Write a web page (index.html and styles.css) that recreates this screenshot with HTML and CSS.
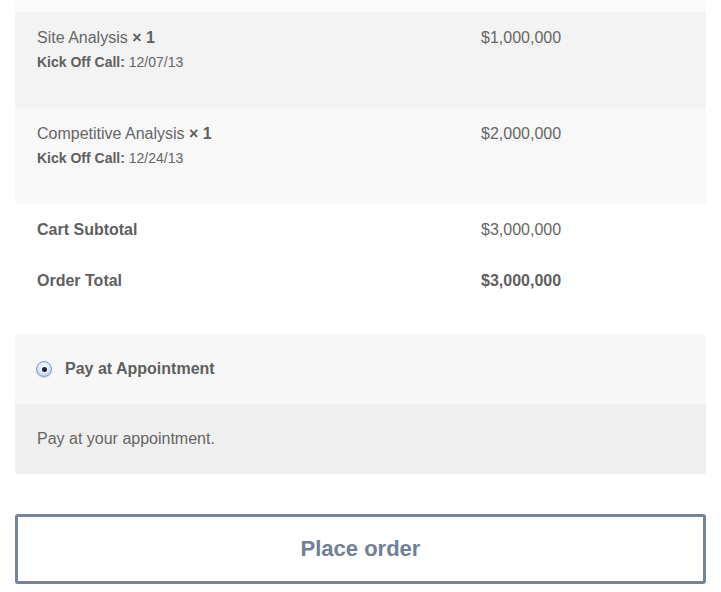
FILE: index.html
```html
<!DOCTYPE html>
<html>
<head>
<meta charset="utf-8">
<link rel="stylesheet" href="styles.css">
</head>
<body>
<div class="page">
  <div class="cart">
    <div class="top-strip"></div>
    <div class="item item-odd">
      <div class="item-name">
        <div class="name">Site Analysis <strong class="qty">× 1</strong></div>
        <div class="meta"><strong>Kick Off Call:</strong> 12/07/13</div>
      </div>
      <div class="price">$1,000,000</div>
    </div>
    <div class="item item-even">
      <div class="item-name">
        <div class="name">Competitive Analysis <strong class="qty">× 1</strong></div>
        <div class="meta"><strong>Kick Off Call:</strong> 12/24/13</div>
      </div>
      <div class="price">$2,000,000</div>
    </div>
  </div>
  <div class="totals">
    <div class="total-row">
      <div class="total-label">Cart Subtotal</div>
      <div class="price">$3,000,000</div>
    </div>
    <div class="total-row">
      <div class="total-label">Order Total</div>
      <div class="price"><strong>$3,000,000</strong></div>
    </div>
  </div>
  <div class="payment">
    <div class="payment-head">
      <span class="radio"><span class="radio-dot"></span></span>
      <span class="payment-label">Pay at Appointment</span>
    </div>
    <div class="payment-body">Pay at your appointment.</div>
  </div>
  <div class="actions">
    <button class="place-order">Place order</button>
  </div>
</div>
</body>
</html>
```

FILE: styles.css
```css
html, body {
  margin: 0;
  padding: 0;
  background: #ffffff;
}
body {
  font-family: "Liberation Sans", Arial, Helvetica, sans-serif;
  color: #666666;
  font-size: 16px;
}
.page {
  padding: 0 15px;
}
.cart {
  border-radius: 0 0 3px 3px;
  overflow: hidden;
}
.top-strip {
  height: 12px;
  background: #fafafa;
}
.item {
  display: flex;
  height: 96px;
  box-sizing: border-box;
  padding-top: 14px;
}
.item-odd {
  background: #f3f3f3;
}
.item-even {
  background: #f8f8f8;
}
.item-name {
  width: 444px;
  padding-left: 22px;
  box-sizing: border-box;
}
.name {
  line-height: 24px;
}
.qty {
  font-weight: bold;
  color: #5f5f5f;
}
.meta {
  font-size: 14px;
  line-height: 20px;
  margin-top: 2px;
}
.meta strong {
  color: #5f5f5f;
}
.price {
  padding-left: 22px;
  line-height: 24px;
}
.price strong {
  color: #5f5f5f;
}
.totals {
  padding-bottom: 28px;
}
.total-row {
  display: flex;
  align-items: center;
  height: 51px;
}
.total-label {
  width: 444px;
  padding-left: 22px;
  box-sizing: border-box;
  font-weight: bold;
  color: #5f5f5f;
}
.payment {
  border-radius: 3px;
  overflow: hidden;
}
.payment-head {
  height: 70px;
  background: #f7f7f7;
  display: flex;
  align-items: center;
  padding-left: 21px;
}
.radio {
  width: 16px;
  height: 16px;
  box-sizing: border-box;
  border-radius: 50%;
  border: 1px solid #7f9bbf;
  background: radial-gradient(circle at 50% 40%, #ffffff 0%, #d7e6f8 50%, #a3c2ea 100%);
  display: flex;
  align-items: center;
  justify-content: center;
  margin-right: 13px;
  box-shadow: 0 1px 1px rgba(0,0,0,0.15);
}
.radio-dot {
  width: 5px;
  height: 5px;
  border-radius: 50%;
  background: #1b2330;
}
.payment-label {
  font-weight: bold;
  color: #5f5f5f;
}
.payment-body {
  height: 70px;
  background: #efefef;
  display: flex;
  align-items: center;
  padding-left: 22px;
}
.actions {
  padding-top: 40px;
}
.place-order {
  display: block;
  width: 100%;
  height: 70px;
  box-sizing: border-box;
  border: 3px solid #74849b;
  border-radius: 3px;
  background: #ffffff;
  font-family: "Liberation Sans", Arial, Helvetica, sans-serif;
  font-weight: bold;
  font-size: 22px;
  color: #708096;
  padding: 0;
}
```
